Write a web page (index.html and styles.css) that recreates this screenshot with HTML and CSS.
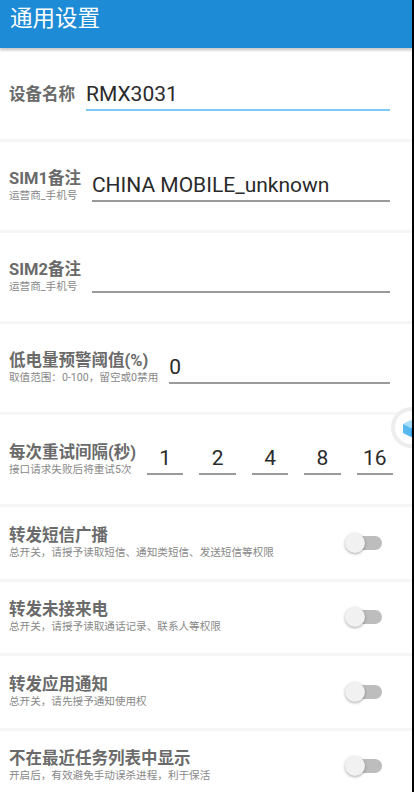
FILE: index.html
```html
<!DOCTYPE html>
<html lang="zh-CN">
<head>
<meta charset="utf-8">
<title>通用设置</title>
<link rel="stylesheet" href="styles.css">
</head>
<body>
<div class="app">
  <header class="topbar"><h1 class="title">通用设置</h1></header>
  <main class="list">
    <section class="row row-input">
      <div class="label"><div class="label-title">设备名称</div></div>
      <div class="field field-focus"><span class="field-text">RMX3031</span></div>
    </section>
    <section class="row row-input">
      <div class="label"><div class="label-title">SIM1备注</div><div class="label-sub">运营商_手机号</div></div>
      <div class="field"><span class="field-text">CHINA MOBILE_unknown</span></div>
    </section>
    <section class="row row-input">
      <div class="label"><div class="label-title">SIM2备注</div><div class="label-sub">运营商_手机号</div></div>
      <div class="field"><span class="field-text">&nbsp;</span></div>
    </section>
    <section class="row row-input">
      <div class="label"><div class="label-title">低电量预警阈值(%)</div><div class="label-sub">取值范围：0-100，留空或0禁用</div></div>
      <div class="field"><span class="field-text">0</span></div>
    </section>
    <section class="row row-retry">
      <div class="label"><div class="label-title">每次重试间隔(秒)</div><div class="label-sub">接口请求失败后将重试5次</div></div>
      <div class="retry">
        <div class="field field-num"><span class="field-text">1</span></div>
        <div class="field field-num"><span class="field-text">2</span></div>
        <div class="field field-num"><span class="field-text">4</span></div>
        <div class="field field-num"><span class="field-text">8</span></div>
        <div class="field field-num"><span class="field-text">16</span></div>
      </div>
    </section>
    <section class="row row-switch">
      <div class="label"><div class="label-title">转发短信广播</div><div class="label-sub">总开关，请授予读取短信、通知类短信、发送短信等权限</div></div>
      <div class="switch"><span class="switch-track"></span><span class="switch-thumb"></span></div>
    </section>
    <section class="row row-switch">
      <div class="label"><div class="label-title">转发未接来电</div><div class="label-sub">总开关，请授予读取通话记录、联系人等权限</div></div>
      <div class="switch"><span class="switch-track"></span><span class="switch-thumb"></span></div>
    </section>
    <section class="row row-switch">
      <div class="label"><div class="label-title">转发应用通知</div><div class="label-sub">总开关，请先授予通知使用权</div></div>
      <div class="switch"><span class="switch-track"></span><span class="switch-thumb"></span></div>
    </section>
    <section class="row row-switch">
      <div class="label"><div class="label-title">不在最近任务列表中显示</div><div class="label-sub">开启后，有效避免手动误杀进程，利于保活</div></div>
      <div class="switch"><span class="switch-track"></span><span class="switch-thumb"></span></div>
    </section>
  </main>
  <div class="float-ball">
    <svg class="cube" width="18" height="19" viewBox="0 0 18 19">
      <path d="M9 1 L17 5 L9 9 L1 5 Z" fill="#a5dcf8"/>
      <path d="M1 5 L9 9 L9 18 L1 14 Z" fill="#56b8ee"/>
      <path d="M17 5 L9 9 L9 18 L17 14 Z" fill="#2f9be0"/>
    </svg>
  </div>
</div>
</body>
</html>
```
FILE: styles.css
```css
* { box-sizing: border-box; margin: 0; padding: 0; }
html, body { background: #000; }
body { margin: 0; font-family: Roboto, "Noto Sans CJK SC", sans-serif; }

.app {
  width: 412px;
  height: 792px;
  background: #f6f6f6;
  position: relative;
  overflow: hidden;
}

.topbar {
  height: 48px;
  background: #1d8bd5;
  padding: 4px 10px 0;
  box-shadow: 0 2px 3px rgba(0, 0, 0, 0.2);
  position: relative;
  z-index: 1;
}
.title {
  font-size: 22.5px;
  line-height: 28px;
  color: #fff;
  font-weight: 400;
}

.list {
  display: flex;
  flex-direction: column;
  gap: 3px;
  padding-top: 3px;
}

.row {
  background: #fff;
  display: flex;
  align-items: center;
  padding: 0 22px 0 9px;
  gap: 11px;
}
.row-input { height: 88px; }
.row-retry { height: 89px; }
.row-switch { height: 71.5px; padding-right: 30px; }

.label { display: flex; flex-direction: column; flex: none; }
.row-switch .label { flex: 1; }
.label-title {
  font-size: 16.5px;
  line-height: 20px;
  font-weight: 700;
  color: #6a6a6a;
}
.label-sub {
  font-size: 10.6px;
  line-height: 14px;
  color: #888;
}

.field {
  flex: 1;
  min-width: 0;
  border-bottom: 2px solid #9a9a9a;
  padding-bottom: 1px;
}
.field-focus { border-bottom-color: #7ccaf5; }
.field-text {
  display: block;
  font-size: 21px;
  line-height: 28px;
  color: #2a2a2a;
  white-space: nowrap;
}
.field-num { text-align: center; }

.retry {
  flex: 1;
  display: flex;
  gap: 16px;
  margin-right: -3px;
}

.switch {
  width: 37px;
  height: 24px;
  position: relative;
  flex: none;
}
.switch-track {
  position: absolute;
  left: 4px;
  right: 0;
  top: 5px;
  height: 14px;
  border-radius: 7px;
  background: #bdbdbd;
}
.switch-thumb {
  position: absolute;
  left: 0;
  top: 2px;
  width: 20px;
  height: 20px;
  border-radius: 50%;
  background: #f1f1f1;
  box-shadow: 0 1px 3px rgba(0, 0, 0, 0.35);
}

.float-ball {
  position: absolute;
  left: 391px;
  top: 407px;
  width: 41px;
  height: 41px;
  border-radius: 50%;
  border: 4px solid #ededed;
  background: #fff;
}
.cube {
  position: absolute;
  left: 7px;
  top: 8px;
}
```
